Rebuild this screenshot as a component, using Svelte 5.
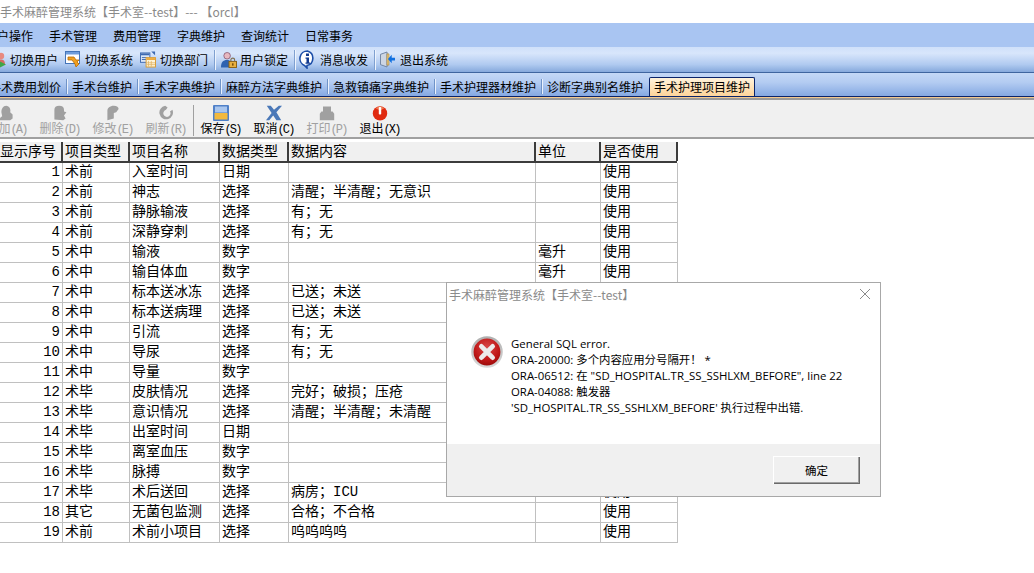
<script>
  const menus = ['用户操作','手术管理','费用管理','字典维护','查询统计','日常事务'];
  const tabs = ['手术费用划价','手术台维护','手术字典维护','麻醉方法字典维护','急救镇痛字典维护','手术护理器材维护','诊断字典别名维护','手术护理项目维护'];
  const cols = ['显示序号','项目类型','项目名称','数据类型','数据内容','单位','是否使用'];
  const rows = [
    [1,'术前','入室时间','日期','','','使用'],
    [2,'术前','神志','选择','清醒；半清醒；无意识','','使用'],
    [3,'术前','静脉输液','选择','有；无','','使用'],
    [4,'术前','深静穿刺','选择','有；无','','使用'],
    [5,'术中','输液','数字','','毫升','使用'],
    [6,'术中','输自体血','数字','','毫升','使用'],
    [7,'术中','标本送冰冻','选择','已送；未送','','使用'],
    [8,'术中','标本送病理','选择','已送；未送','','使用'],
    [9,'术中','引流','选择','有；无','','使用'],
    [10,'术中','导尿','选择','有；无','','使用'],
    [11,'术中','导量','数字','','','使用'],
    [12,'术毕','皮肤情况','选择','完好；破损；压疮','','使用'],
    [13,'术毕','意识情况','选择','清醒；半清醒；未清醒','','使用'],
    [14,'术毕','出室时间','日期','','','使用'],
    [15,'术毕','离室血压','数字','','','使用'],
    [16,'术毕','脉搏','数字','','','使用'],
    [17,'术毕','术后送回','选择','病房；ICU','','使用'],
    [18,'其它','无菌包监测','选择','合格；不合格','','使用'],
    [19,'术前','术前小项目','选择','呜呜呜呜','','使用']
  ];
</script>

<div class="page">
  <div class="title">手术麻醉管理系统【手术室--test】--- 【orcl】</div>

  <nav class="menu">
    {#each menus as m}<span class="menu-item">{m}</span>{/each}
  </nav>

  <div class="quick">
    <span class="q q1">
      <svg width="16" height="16" viewBox="0 0 16 16"><circle cx="11" cy="4" r="3.200" fill="#e88a80"/><path d="M7 12c0-3 1.500-4.500 4-4.500s4 1.500 4 4.500z" fill="#d86a60"/><path d="M10 9.500l6 3-6 3z" fill="#3fa648"/></svg>
      切换用户
    </span>
    <span class="q q2">
      <svg width="16" height="17" viewBox="0 0 16 17"><rect x=".5" y=".5" width="14" height="12" fill="#fff" stroke="#4474b8"/><rect x="1" y="1" width="13" height="2.500" fill="#6f9ddc"/><path d="M3 6h6l2 3h3l-2 2 2 2-3 3-1-3-3-4H3z" fill="#f0a020" stroke="#b86a00" stroke-width=".8"/></svg>
      切换系统
    </span>
    <span class="q q3">
      <svg width="17" height="17" viewBox="0 0 17 17"><rect x=".5" y="1.500" width="10" height="10" fill="#dbe7f8" stroke="#3c68b0"/><rect x="1" y="2" width="9" height="2" fill="#3c68b0"/><rect x="2" y="6" width="6" height="1" fill="#3c68b0"/><rect x="2" y="8" width="6" height="1" fill="#3c68b0"/><rect x="6.500" y="6.500" width="10" height="10" fill="#fff5d8" stroke="#d89a30"/><rect x="7" y="7" width="9" height="2" fill="#eea838"/><path d="M9 10v6M12 10v6M7 12h9M7 14h9" stroke="#e0b060" stroke-width=".8"/><path d="M12 0h4v4z" fill="#3c68b0"/></svg>
      切换部门
    </span>
    <i class="qsep"></i>
    <span class="q q4">
      <svg width="17" height="18" viewBox="0 0 17 18"><circle cx="6.500" cy="4.500" r="3.500" fill="#e8b8c0" stroke="#80506a" stroke-width=".8"/><path d="M0 17c0-6 2-8 6.500-8 2 0 3 .5 4 2v6z" fill="#2f62b0"/><rect x="8.500" y="10.500" width="8" height="6.500" fill="#e8b040" stroke="#8a6010"/><path d="M10.500 10.500V9a2 2 0 0 1 4 0v1.500" fill="none" stroke="#807050" stroke-width="1.200"/><rect x="11.800" y="12.500" width="1.500" height="2.500" fill="#704808"/></svg>
      用户锁定
    </span>
    <i class="qsep"></i>
    <span class="q q5">
      <svg width="17" height="19" viewBox="0 0 17 19"><path d="M8.500 1a7.500 7.500 0 0 0-3 14.400L8 18v-2.500a7.500 7.500 0 0 0 .5-14.500z" fill="#fff" stroke="#1c4ea8" stroke-width="1.600"/><rect x="7" y="3.500" width="3" height="2.500" fill="#123a90"/><path d="M6.500 7.500H10v5h1v1.200H6.500v-1.200h1v-3.800h-1z" fill="#123a90"/></svg>
      消息收发
    </span>
    <i class="qsep"></i>
    <span class="q q6">
      <svg width="16" height="17" viewBox="0 0 16 17"><path d="M.5 3l7-2.500v16l-7-2.500z" fill="#cdd6e4" stroke="#6b7f9f"/><path d="M7.500 2.500h2v12h-2z" fill="#f0d080" stroke="#b08a40" stroke-width=".8"/><path d="M16 6.500h-3.500V3.500L8.500 8l4 4.500v-3H16z" fill="#1070e0"/></svg>
      退出系统
    </span>
  </div>

  <div class="tabs">
    {#each tabs as t, i}
      <span class="tab" class:active={i === tabs.length - 1} class:nosep={i >= tabs.length - 2}>{t}</span>
    {/each}
  </div>
  <div class="tabline"></div>

  <div class="tools">
    <div class="tool off">
      <svg width="16" height="16" viewBox="0 0 20 20"><path d="M1 19c0-3 1-4 3-5l-1-5c0-4 2-8 6-8s6 4 5 8l3 3v5l-3 2z" fill="#a0a0a0"/></svg>
      <span>增加<em>(A)</em></span>
    </div>
    <div class="tool off">
      <svg width="16" height="16" viewBox="0 0 20 20"><path d="M3 18V6c0-3 2-5 6-5s6 2 6 5v2l3 1-3 4 2 4-3 2z" fill="#a0a0a0"/></svg>
      <span>删除<em>(D)</em></span>
    </div>
    <div class="tool off">
      <svg width="16" height="16" viewBox="0 0 20 20"><path d="M3 19V7c0-3 3-6 8-6 4 0 6 2 6 4l-3 4-3 1v7z" fill="#a0a0a0"/></svg>
      <span>修改<em>(E)</em></span>
    </div>
    <div class="tool off">
      <svg width="16" height="16" viewBox="0 0 20 20"><path d="M9 1l3 2-2 3a4.500 4.500 0 1 0 5 2l3-2a8.500 8.500 0 1 1-9-5z" fill="#a0a0a0"/></svg>
      <span>刷新<em>(R)</em></span>
    </div>
    <i class="tsep"></i>
    <div class="tool">
      <svg width="16" height="16" viewBox="0 0 16 16"><rect width="16" height="16" rx="1" fill="#4f80c8"/><rect x="2" y="1.500" width="12" height="6" fill="#a9c6ee"/><rect x="1.500" y="8" width="13" height="6.500" fill="#f2b93e"/></svg>
      <span>保存<em>(S)</em></span>
    </div>
    <div class="tool">
      <svg width="16" height="16" viewBox="0 0 20 20"><path d="M1 1h5l4 5 6-5h4l-7 8 6 10h-6l-4-6-5 6H0l7-9z" fill="#4a78b8"/></svg>
      <span>取消<em>(C)</em></span>
    </div>
    <div class="tool off">
      <svg width="16" height="16" viewBox="0 0 20 20"><path d="M5 8V2h10v6h2l2 3v8H1v-8l2-3z" fill="#a0a0a0"/></svg>
      <span>打印<em>(P)</em></span>
    </div>
    <div class="tool">
      <svg width="16" height="16" viewBox="0 0 20 20"><circle cx="10" cy="10.500" r="9" fill="#e02a10"/><path d="M4.500 4a9 9 0 0 1 11 0l-5.500 3z" fill="#ef7a50"/><rect x="8.500" y="2.500" width="3" height="9.500" rx="1" fill="#fff"/></svg>
      <span>退出<em>(X)</em></span>
    </div>
  </div>

  <div class="grid">
    <div class="row head">
      {#each cols as c}<span class="cell">{c}</span>{/each}
    </div>
    {#each rows as r}
      <div class="row">
        {#each r as v, i}<span class="cell" class:num={i === 0}>{v}</span>{/each}
      </div>
    {/each}
  </div>

  <div class="dialog">
    <header class="dlg-title">
      <span>手术麻醉管理系统【手术室--test】</span>
      <svg class="close" width="12" height="12" viewBox="0 0 12 12"><path d="M1 1l10 10M11 1L1 11" stroke="#8a8a8a" stroke-width="1"/></svg>
    </header>
    <div class="dlg-body">
      <svg class="err" width="32" height="32" viewBox="0 0 34 34">
        <defs>
          <radialGradient id="red" cx=".5" cy=".35" r=".7"><stop offset="0" stop-color="#d84848"/><stop offset=".6" stop-color="#c01818"/><stop offset="1" stop-color="#8e0606"/></radialGradient>
          <linearGradient id="ring" x1="0" y1="0" x2="0" y2="1"><stop offset="0" stop-color="#b0b0b0"/><stop offset="1" stop-color="#d8d8d8"/></linearGradient>
        </defs>
        <circle cx="17" cy="17" r="15.500" fill="url(#red)" stroke="url(#ring)" stroke-width="2.500"/>
        <path d="M11 11l12 12M23 11L11 23" stroke="#ececec" stroke-width="5" stroke-linecap="round"/>
      </svg>
      <div class="msg">
        <p>General SQL error.</p>
        <p>ORA-20000: 多个内容应用分号隔开！ *</p>
        <p>ORA-06512: 在 "SD_HOSPITAL.TR_SS_SSHLXM_BEFORE", line 22</p>
        <p>ORA-04088: 触发器</p>
        <p>'SD_HOSPITAL.TR_SS_SSHLXM_BEFORE' 执行过程中出错.</p>
      </div>
    </div>
    <footer class="dlg-foot"><button>确定</button></footer>
  </div>
</div>

<style>
  :global(body) { margin: 0; background: #fff; }
  .page {
    position: relative;
    width: 1034px;
    height: 573px;
    overflow: hidden;
    font-family: "Noto Sans CJK SC", sans-serif;
    font-size: 12px;
    color: #000;
    background: #fff;
  }
  .title {
    height: 23px;
    line-height: 24px;
    color: #8a8a8a;
    white-space: nowrap;
  }
  .menu {
    height: 24px;
    display: flex;
    align-items: center;
    margin-left: -23px;
    background: #a9c5f2;
  }
  .menu-item { padding: 0 8px; white-space: nowrap; }
  .quick {
    height: 26px;
    box-sizing: border-box;
    display: flex;
    align-items: center;
    background: linear-gradient(#cfe0fa, #d8e6fb 25%, #b0caf0 70%, #86a9dc);
    border-bottom: 1px solid #3f659f;
    white-space: nowrap;
  }
  .q { display: flex; align-items: center; gap: 4px; }
  .q1 { margin-left: -10px; width: 68px; flex: none; }
  .q2 { margin-left: 7px; width: 68px; flex: none; }
  .q3 { margin-left: 7px; gap: 4px; width: 68px; flex: none; }
  .q4 { margin-left: 6px; gap: 3px; width: 67px; flex: none; }
  .q5 { margin-left: 4px; gap: 4px; width: 69px; flex: none; }
  .q6 { margin-left: 5px; gap: 5px; width: 68px; flex: none; }
  .qsep { width: 1px; height: 20px; margin-left: 6px; background: #7fa0d0; box-shadow: 1px 0 #eef4fd; flex: none; }
  .tabs {
    height: 23px;
    box-sizing: border-box;
    display: flex;
    align-items: flex-end;
    margin-left: -16px;
    background: linear-gradient(#c4d8f6, #b4ccf2 40%, #85a9e2);
  }
  .tab {
    height: 19px;
    line-height: 19px;
    padding: 0 5px;
    margin-right: 1px;
    white-space: nowrap;
    position: relative;
    flex: none;
  }
  .tab::after {
    content: "";
    position: absolute;
    right: -1px;
    top: 2px;
    width: 1px;
    height: 15px;
    background: #6f93c8;
    box-shadow: 1px 0 #eaf1fc;
  }
  .tab.nosep::after { display: none; }
  .tab.active {
    box-sizing: border-box;
    border: 1px solid #0a246a;
    border-bottom: none;
    border-radius: 2px 2px 0 0;
    padding: 0 4px;
    line-height: 18px;
    background: linear-gradient(#fff3dc, #fdd49a);
  }
  .tabline {
    height: 4px;
    background: linear-gradient(#0a246a 0 1px, #f3c98e 1px 2px, #9a9a9a 2px);
  }
  .tools {
    height: 39px;
    box-sizing: border-box;
    display: flex;
    align-items: flex-start;
    margin-left: -20px;
    background: #f0f0f0;
    border-bottom: 2px solid #a0a0a0;
    padding-top: 5px;
  }
  .tool {
    width: 53px;
    flex: none;
    display: flex;
    flex-direction: column;
    align-items: center;
    white-space: nowrap;
    line-height: 14px;
  }
  .tool svg { display: block; }
  .tool em {
    font-style: normal;
    font-family: "Liberation Mono", monospace;
    font-size: 12px;
    letter-spacing: -1.800px;
  }
  .tool.off { color: #a0a0a0; }
  .tsep { width: 1px; height: 31px; margin: 0 0 0 1px; background: #a0a0a0; flex: none; }
  .grid {
    margin-top: 3px;
    width: 678px;
    font-family: "Liberation Mono", "Noto Sans CJK SC", monospace;
    font-size: 14px;
  }
  .row {
    display: grid;
    grid-template-columns: 63px 67px 90px 69px 247px 65px 78px;
    height: 20px;
    box-sizing: border-box;
    border-bottom: 1px solid #c0c0c0;
  }
  .cell {
    box-sizing: border-box;
    border-right: 1px solid #c0c0c0;
    padding-left: 2px;
    line-height: 19px;
    white-space: nowrap;
    overflow: hidden;
  }
  .cell:last-child { margin-right: 1px; }
  .num { text-align: right; padding: 0 2px 0 0; }
  .head { height: 21px; background: #f0f0f0; border-bottom: 2px solid #3c3c3c; margin-right: 1px; }
  .head .cell { border-right: 2px solid #3c3c3c; line-height: 20px; }
  .head .cell:first-child { padding-left: 0; }
  .dialog {
    position: absolute;
    left: 446px;
    top: 282px;
    width: 435px;
    height: 215px;
    box-sizing: border-box;
    border: 1px solid #a8a8a8;
    background: #fff;
    display: flex;
    flex-direction: column;
  }
  .dlg-title {
    height: 24px;
    box-sizing: border-box;
    padding: 0 9px 2px 2px;
    display: flex;
    align-items: center;
    justify-content: space-between;
    color: #8a8a8a;
    flex: none;
  }
  .dlg-body {
    flex: 1;
    display: flex;
    padding: 29px 0 0 24px;
    gap: 8px;
    min-height: 0;
  }
  .err { flex: none; }
  .msg { font-family: "Open Sans", "Noto Sans CJK SC", sans-serif; font-size: 11.400px; line-height: 16px; }
  .msg p { margin: 0; white-space: nowrap; }
  .dlg-foot {
    height: 52px;
    flex: none;
    box-sizing: border-box;
    background: #f0f0f0;
    display: flex;
    justify-content: flex-end;
    align-items: flex-start;
    padding: 12px 20px 0 0;
  }
  button {
    width: 87px;
    height: 28px;
    background: #f0f0f0;
    border: none;
    box-shadow: inset 1px 1px #fff, inset -1px -1px #6a6a6a, inset -2px -2px #a0a0a0;
    font-family: "Noto Sans CJK SC", sans-serif;
    font-size: 11.500px;
    color: #000;
    padding: 0;
  }
</style>
